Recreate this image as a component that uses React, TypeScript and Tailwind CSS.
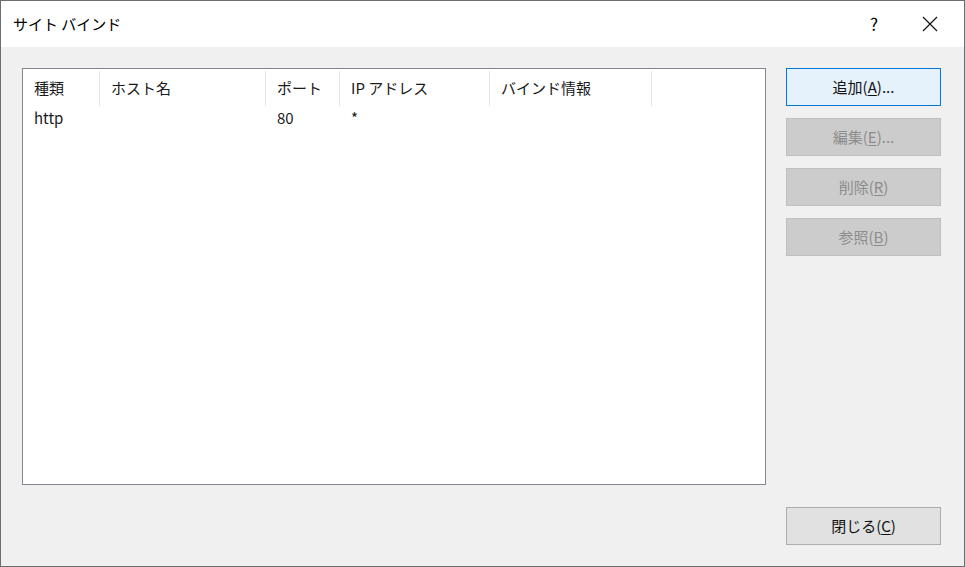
export default function App() {
  const font = { fontFamily: '"Noto Sans CJK JP", "Noto Sans", sans-serif' };
  const cols = [
    { t: "種類", w: 77 },
    { t: "ホスト名", w: 166 },
    { t: "ポート", w: 74 },
    { t: "IP アドレス", w: 150 },
    { t: "バインド情報", w: 162 },
  ];
  const Btn = ({ label, k, rest, disabled, primary }: { label: string; k: string; rest: string; disabled?: boolean; primary?: boolean }) => (
    <div
      className={`h-[38px] w-[155px] flex items-center justify-center text-[15px] border ${
        primary ? "border-[#0078d7] bg-[#e5f1fb] text-[#111]" : disabled ? "border-[#bfbfbf] bg-[#cccccc] text-[#8c8c8c]" : "border-[#adadad] bg-[#e1e1e1] text-[#111]"
      }`}
    >
      {label}(<span className="underline underline-offset-2">{k}</span>){rest}
    </div>
  );
  return (
    <div className="w-[965px] h-[567px] bg-[#f0f0f0] border border-[#6d6d6d] flex flex-col overflow-hidden" style={font}>
      <div className="h-[46px] bg-white flex items-center pl-[12px] text-[15px] text-black">
        <span className="flex-1">サイト バインド</span>
        <span className="w-[44px] text-center text-[17px] mr-[26px]">?</span>
        <svg width="16" height="16" viewBox="0 0 16 16" className="mr-[26px]">
          <path d="M1 1L15 15M15 1L1 15" stroke="#111" strokeWidth="1.2" />
        </svg>
      </div>
      <div className="flex flex-1 pt-[21px] pl-[21px] pr-[23px] pb-[21px]">
        <div className="w-[744px] h-[417px] bg-white border border-[#828790] text-[15px] text-[#1a1a1a]">
          <div className="flex h-[37px] pt-[2px]">
            {cols.map((c) => (
              <div key={c.t} className="border-r border-[#e5e5e5] flex items-center pl-[11px] h-[35px]" style={{ width: c.w }}>
                {c.t}
              </div>
            ))}
          </div>
          <div className="flex h-[24px] items-center">
            <div className="w-[77px] pl-[11px]">http</div>
            <div className="w-[166px]" />
            <div className="w-[74px] pl-[11px]">80</div>
            <div className="pl-[11px]">*</div>
          </div>
        </div>
        <div className="flex-1 flex flex-col items-end">
          <div className="flex flex-col gap-[12px]">
            <Btn label="追加" k="A" rest="..." primary />
            <Btn label="編集" k="E" rest="..." disabled />
            <Btn label="削除" k="R" rest="" disabled />
            <Btn label="参照" k="B" rest="" disabled />
          </div>
          <div className="flex-1" />
          <Btn label="閉じる" k="C" rest="" />
        </div>
      </div>
    </div>
  );
}
